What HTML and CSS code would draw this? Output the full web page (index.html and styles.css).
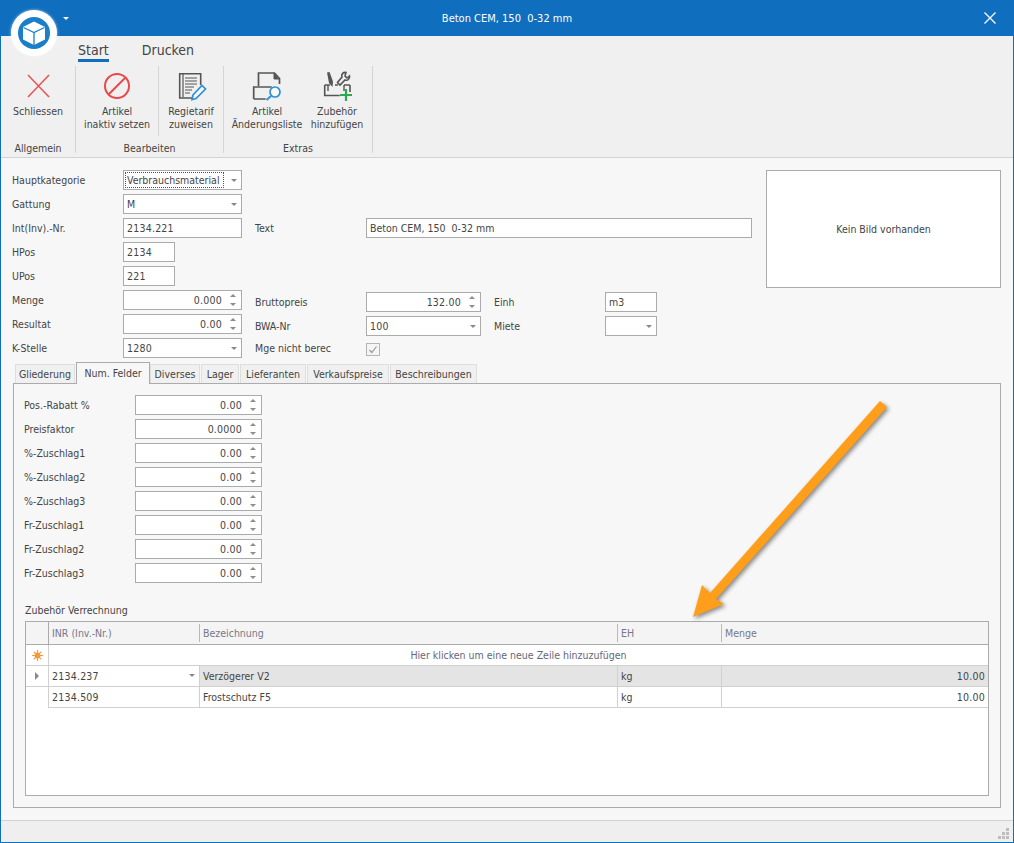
FILE: index.html
```html
<!DOCTYPE html>
<html lang="de">
<head>
<meta charset="utf-8">
<title>Beton CEM, 150 0-32 mm</title>
<link rel="stylesheet" href="styles.css">
</head>
<body>
<div class="window">
  <header class="titlebar">
    <span class="title">Beton CEM, 150&nbsp; 0-32 mm</span>
    <svg class="close" width="12" height="12" viewBox="0 0 12 12"><path d="M.5.5l11 11M11.5.5l-11 11" stroke="#fff" stroke-width="1.3" fill="none"/></svg>
  </header>
  <div class="logo">
    <svg width="46" height="46" viewBox="0 0 46 46">
      <circle cx="23" cy="23" r="16" fill="#1a7fc8"/>
      <path d="M23 11.500l11 5.500v12.500l-11 5.500-11-5.500V17z" fill="#fff"/>
      <path d="M12.500 17.500l10.500 5 10.500-5M23 22.500V35" fill="none" stroke="#1a7fc8" stroke-width="1.300"/>
    </svg>
  </div>
  <span class="qat-caret"></span>

  <section class="ribbon">
    <nav class="ribbon-tabs">
      <span class="rtab rtab-active">Start</span>
      <span class="rtab">Drucken</span>
    </nav>
    <div class="ribbon-body">
      <div class="rgroup rgroup-1">
        <div class="rbuttons">
          <div class="rbtn rbtn-close">
            <svg width="32" height="32" viewBox="0 0 32 32"><path d="M6 5l21 22M27 5L6 27" stroke="#e8565a" stroke-width="1.600" fill="none"/></svg>
            <span>Schliessen</span>
          </div>
        </div>
        <div class="rlabel">Allgemein</div>
      </div>
      <div class="rgroup rgroup-2">
        <div class="rbuttons">
          <div class="rbtn rbtn-inactive">
            <svg width="32" height="32" viewBox="0 0 32 32"><circle cx="16" cy="16" r="12" fill="none" stroke="#e8484c" stroke-width="2"/><path d="M7.500 24.500l17-17" stroke="#e8484c" stroke-width="2"/></svg>
            <span>Artikel<br>inaktiv setzen</span>
          </div>
          <div class="rbtn rbtn-regie">
            <svg width="32" height="32" viewBox="0 0 32 32">
              <path d="M17 28H4.700V3.700h21V15" fill="none" stroke="#555" stroke-width="1.600"/>
              <path d="M8 4v23" stroke="#555" stroke-width="1.200"/>
              <path d="M10 8h12M10 11h12M10 14h12M10 17h9M10 20h7M10 23h5" stroke="#555" stroke-width="1.200"/>
              <path d="M18 25l9-9.500 3.500 3.500-9.500 9.500-4 1z" fill="#f4f9fd" stroke="#2d8fd5" stroke-width="1.700"/>
            </svg>
            <span>Regietarif<br>zuweisen</span>
          </div>
        </div>
        <div class="rlabel">Bearbeiten</div>
      </div>
      <div class="rgroup rgroup-3">
        <div class="rbuttons">
          <div class="rbtn rbtn-list">
            <svg width="32" height="32" viewBox="0 0 32 32">
              <path d="M7.500 16V3h16l5 5.500V14" fill="none" stroke="#555" stroke-width="1.700"/>
              <path d="M23 3v6h5" fill="#555" stroke="#555" stroke-width="1"/>
              <path d="M2.700 29V17h18M2.700 29h12" fill="none" stroke="#555" stroke-width="1.700"/>
              <circle cx="24" cy="22" r="5" fill="#f6fbff" stroke="#2d8fd5" stroke-width="1.700"/>
              <path d="M20 26l-4.500 4" stroke="#2d8fd5" stroke-width="2"/>
            </svg>
            <span>Artikel<br>Änderungsliste</span>
          </div>
          <div class="rbtn rbtn-add">
            <svg width="32" height="32" viewBox="0 0 32 32">
              <path d="M3.700 15v10.500h15M29 22V15M3.700 15H9M14 15h3M23 15h6" fill="none" stroke="#555" stroke-width="1.600"/>
              <path d="M6 2.500l2.500-.5 3.500 9.500-.5 5.500-3.500-4z" fill="#555"/>
              <path d="M25 2.500c-3-.5-5 2-4 4.500L16.500 12.500 19 15l5-5c2.500 1 5-1 4.500-4L26 8l-2-2z" fill="none" stroke="#555" stroke-width="1.600"/>
              <path d="M7 21v-6M23 21v-6" stroke="#555" stroke-width="1.400"/>
              <path d="M25 19v12M19 25h12" stroke="#2fa84f" stroke-width="2.200"/>
            </svg>
            <span>Zubehör<br>hinzufügen</span>
          </div>
        </div>
        <div class="rlabel">Extras</div>
      </div>
    </div>
  </section>

  <main class="content">
    <form class="head-form">
      <label class="r1 c1">Hauptkategorie</label>
      <div class="field r1 c2 combo"><span class="val focus">Verbrauchsmaterial</span><i class="caret"></i></div>

      <div class="picture"><span>Kein Bild vorhanden</span></div>

      <label class="r2 c1">Gattung</label>
      <div class="field r2 c2 combo"><span class="val">M</span><i class="caret"></i></div>

      <label class="r3 c1">Int(Inv).-Nr.</label>
      <div class="field r3 c2"><span class="val digits">2134.221</span></div>
      <label class="r3 c3">Text</label>
      <div class="field r3 c-text"><span class="val">Beton CEM, 150&nbsp; 0-32 mm</span></div>

      <label class="r4 c1">HPos</label>
      <div class="field r4 c2-short"><span class="val digits">2134</span></div>

      <label class="r5 c1">UPos</label>
      <div class="field r5 c2-short"><span class="val digits">221</span></div>

      <label class="r6 c1">Menge</label>
      <div class="field r6 c2 num"><span class="val digits">0.000</span><i class="spin"></i></div>
      <label class="r6 c3 low">Bruttopreis</label>
      <div class="field r6 c4 num low"><span class="val digits">132.00</span><i class="spin"></i></div>
      <label class="r6 c5 low">Einh</label>
      <div class="field r6 c6 low"><span class="val">m3</span></div>

      <label class="r7 c1">Resultat</label>
      <div class="field r7 c2 num"><span class="val digits">0.00</span><i class="spin"></i></div>
      <label class="r7 c3 low">BWA-Nr</label>
      <div class="field r7 c4 combo low"><span class="val digits">100</span><i class="caret"></i></div>
      <label class="r7 c5 low">Miete</label>
      <div class="field r7 c6 combo low"><span class="val"></span><i class="caret"></i></div>

      <label class="r8 c1">K-Stelle</label>
      <div class="field r8 c2 combo"><span class="val digits">1280</span><i class="caret"></i></div>
      <label class="r8 c3">Mge nicht berec</label>
      <div class="check r8 c4">
        <svg width="12" height="11" viewBox="0 0 12 11"><path d="M2.500 6l2.300 2.500 4.700-6" fill="none" stroke="#9a9a9a" stroke-width="1.200"/></svg>
      </div>
    </form>

    <div class="tabs">
      <span class="tab t-glied">Gliederung</span>
      <span class="tab tab-active t-num">Num. Felder</span>
      <span class="tab t-div">Diverses</span>
      <span class="tab t-lager">Lager</span>
      <span class="tab t-lief">Lieferanten</span>
      <span class="tab t-verk">Verkaufspreise</span>
      <span class="tab t-besch">Beschreibungen</span>
    </div>

    <section class="panel">
      <div class="num-fields">
        <label>Pos.-Rabatt %</label><div class="field num"><span class="val digits">0.00</span><i class="spin"></i></div>
        <label>Preisfaktor</label><div class="field num"><span class="val digits">0.0000</span><i class="spin"></i></div>
        <label>%-Zuschlag1</label><div class="field num"><span class="val digits">0.00</span><i class="spin"></i></div>
        <label>%-Zuschlag2</label><div class="field num"><span class="val digits">0.00</span><i class="spin"></i></div>
        <label>%-Zuschlag3</label><div class="field num"><span class="val digits">0.00</span><i class="spin"></i></div>
        <label>Fr-Zuschlag1</label><div class="field num"><span class="val digits">0.00</span><i class="spin"></i></div>
        <label>Fr-Zuschlag2</label><div class="field num"><span class="val digits">0.00</span><i class="spin"></i></div>
        <label>Fr-Zuschlag3</label><div class="field num"><span class="val digits">0.00</span><i class="spin"></i></div>
      </div>

      <div class="grid-caption">Zubehör Verrechnung</div>
      <div class="grid">
        <div class="row head">
          <div class="cell ind"></div>
          <div class="cell first"><span>INR (Inv.-Nr.)</span></div>
          <div class="cell"><span>Bezeichnung</span></div>
          <div class="cell"><span>EH</span></div>
          <div class="cell"><span>Menge</span></div>
        </div>
        <div class="row new">
          <div class="cell ind"><svg width="11" height="11" viewBox="0 0 11 11"><path d="M5.500 0v11M0 5.500h11M1.700 1.700l7.600 7.600M9.300 1.700l-7.600 7.600" stroke="#f59a3c" stroke-width="1.100"/><circle cx="5.500" cy="5.500" r="3" fill="#f59a3c"/></svg></div>
          <div class="cell newtext">Hier klicken um eine neue Zeile hinzuzufügen</div>
        </div>
        <div class="row sel">
          <div class="cell ind"><i class="pointer"></i></div>
          <div class="cell editor digits">2134.237<i class="caret"></i></div>
          <div class="cell">Verzögerer V2</div>
          <div class="cell">kg</div>
          <div class="cell right digits">10.00</div>
        </div>
        <div class="row">
          <div class="cell ind none"></div>
          <div class="cell digits">2134.509</div>
          <div class="cell">Frostschutz F5</div>
          <div class="cell">kg</div>
          <div class="cell right digits">10.00</div>
        </div>
      </div>
    </section>
  </main>

  <footer class="statusbar">
    <svg class="grip" width="11" height="11" viewBox="0 0 11 11"><path d="M8 0h3v3H8zM4 4h3v3H4zM8 4h3v3H8zM0 8h3v3H0zM4 8h3v3H4zM8 8h3v3H8z" fill="#bdbdbd"/></svg>
  </footer>

  <svg class="arrow" width="220" height="240" viewBox="680 390 220 240">
    <polygon points="880,401 887,407 716,599 724,604 693,617 702,585 710,593" fill="#ff9e1b"/>
  </svg>
</div>
</body>
</html>
```
FILE: styles.css
```css
* { box-sizing: border-box; }

html, body { margin: 0; padding: 0; }

body {
  font-family: "DejaVu Sans Condensed", "DejaVu Sans", sans-serif;
  font-stretch: condensed;
  font-size: 10.500px;
  color: #444;
  background: #fff;
}

.digits { letter-spacing: .22px; }

.window {
  position: relative;
  width: 1014px;
  height: 843px;
  display: flex;
  flex-direction: column;
  border: 1px solid #106ebe;
  border-top: 0;
  background: #f7f7f7;
  overflow: hidden;
}

/* title bar */
.titlebar {
  height: 36px;
  flex: none;
  margin: 0 -1px;
  background: #106ebe;
  color: #fff;
  font-size: 11px;
  display: flex;
  align-items: center;
  justify-content: center;
  position: relative;
}

.close { position: absolute; right: 18px; top: 12px; }

.logo {
  position: absolute;
  left: 10px;
  top: 10px;
  width: 46px;
  height: 46px;
  border-radius: 50%;
  background: #fff;
  box-shadow: 0 0 3px rgba(255, 255, 255, .7);
}

.logo svg { display: block; }

.qat-caret {
  position: absolute;
  left: 62px;
  top: 17px;
  border: 3px solid transparent;
  border-top: 3px solid #fff;
}

/* ribbon */
.ribbon {
  flex: none;
  height: 122px;
  background: #f0f0f0;
  border-bottom: 1px solid #d2d2d2;
  display: flex;
  flex-direction: column;
}

.ribbon-tabs {
  height: 30px;
  flex: none;
  padding-left: 77px;
  display: flex;
  gap: 33px;
}

.rtab {
  font-size: 14px;
  line-height: 19px;
  padding-top: 5px;
  color: #444;
  box-sizing: content-box;
  height: 18px;
  white-space: nowrap;
}

.rtab-active { border-bottom: 3px solid #106ebe; }

.ribbon-body {
  height: 87px;
  flex: none;
  display: flex;
}

.rgroup {
  display: flex;
  flex-direction: column;
  border-right: 1px solid #d4d4d4;
}

.rgroup-1 { width: 75px; }
.rgroup-2 { width: 148px; }
.rgroup-3 { width: 149px; }

.rbuttons { display: flex; height: 70px; flex: none; }

.rbtn {
  display: flex;
  flex-direction: column;
  align-items: center;
  padding-top: 4px;
  line-height: 13px;
  text-align: center;
  white-space: nowrap;
}

.rbtn svg { display: block; margin-bottom: 3px; flex: none; }

.rbtn-close { width: 74px; }
.rbtn-inactive { width: 83px; border-right: 1px solid #d4d4d4; }
.rbtn-regie { width: 64px; }
.rbtn-list { width: 86px; }
.rbtn-add { width: 54px; }

.rlabel {
  flex: none;
  margin-top: 6px;
  line-height: 13px;
  text-align: center;
}

/* form */
.content {
  flex: 1;
  min-height: 0;
  display: flex;
  flex-direction: column;
  padding: 12px 12px 12px 11px;
}

.head-form {
  display: grid;
  grid-template-columns: 111px 119px 13px 111px 115px 13px 111px 52px 95px 14px 235px;
  grid-template-rows: repeat(8, 20px);
  row-gap: 4px;
  flex: none;
}

label {
  line-height: 21px;
  white-space: nowrap;
}

.r1 { grid-row: 1; }
.r2 { grid-row: 2; }
.r3 { grid-row: 3; }
.r4 { grid-row: 4; }
.r5 { grid-row: 5; }
.r6 { grid-row: 6; }
.r7 { grid-row: 7; }
.r8 { grid-row: 8; }

.c1 { grid-column: 1; }
.c2 { grid-column: 2; }
.c3 { grid-column: 4; }
.c4 { grid-column: 5; }
.c5 { grid-column: 7; }
.c6 { grid-column: 8; }
.c-text { grid-column: 5 / 10; }
.c2-short { grid-column: 2; width: 52px; }

.low { margin-top: 2px; }

.field {
  height: 20px;
  border: 1px solid #ababab;
  background: #fff;
  display: flex;
  align-items: flex-start;
  padding: 0 3px;
  line-height: 19px;
  position: relative;
  white-space: nowrap;
}

.val { flex: 1; min-width: 0; }

.num { justify-content: flex-end; text-align: right; padding-right: 19px; }

.focus {
  flex: none;
  width: 99px;
  height: 16px;
  line-height: 17px;
  margin-top: 1px;
  outline: 1px dotted #555;
  outline-offset: -1px;
  margin-left: -2px;
  padding-left: 2px;
}

.caret {
  position: absolute;
  right: 4px;
  top: 8px;
  border: 3px solid transparent;
  border-top: 3px solid #888;
  border-bottom: 0;
}

.spin {
  position: absolute;
  right: 5px;
  top: 3px;
  width: 6px;
  height: 12px;
}

.spin::before,
.spin::after {
  content: "";
  position: absolute;
  left: 0;
  border: 3px solid transparent;
}

.spin::before { top: 0; border-top: 0; border-bottom: 3px solid #8c8c8c; }
.spin::after { bottom: 0; border-bottom: 0; border-top: 3px solid #8c8c8c; }

.check {
  width: 14px;
  height: 13px;
  margin-top: 5px;
  border: 1px solid #b5b5b5;
  background: #f4f4f4;
}

.check svg { display: block; margin: 0; }

.picture {
  grid-column: 11;
  grid-row: 1 / 6;
  height: 118px;
  border: 1px solid #ababab;
  background: #fff;
  display: flex;
  align-items: center;
  justify-content: center;
}

/* tabs */
.tabs {
  flex: none;
  margin-top: 4px;
  height: 21px;
  padding-left: 3px;
  display: flex;
  align-items: flex-end;
  position: relative;
  z-index: 1;
}

.tab {
  height: 19px;
  background: #f0f0f0;
  border: 1px solid #dedede;
  border-bottom: 0;
  line-height: 19px;
  text-align: center;
  white-space: nowrap;
  margin-right: 1px;
}

.tab-active {
  height: 22px;
  margin-bottom: -1px;
  background: #f7f7f7;
  border: 1px solid #ababab;
  border-bottom: 0;
  line-height: 20px;
  margin-right: 0;
}

.t-glied { width: 60px; }
.t-num { width: 74px; }
.t-div { width: 50px; }
.t-lager { width: 38px; }
.t-lief { width: 66px; }
.t-verk { width: 82px; }
.t-besch { width: 87px; }

/* panel */
.panel {
  flex: 1;
  min-height: 0;
  margin-left: 1px;
  border: 1px solid #ababab;
  padding: 11px 11px 11px 10px;
  display: flex;
  flex-direction: column;
}

.num-fields {
  display: grid;
  grid-template-columns: 111px 127px;
  grid-auto-rows: 20px;
  row-gap: 4px;
  flex: none;
}

.grid-caption {
  margin: 20px 0 4px;
  padding-left: 1px;
  line-height: 15px;
  height: 14px;
  flex: none;
}

.grid {
  flex: 1;
  margin-left: 1px;
  border: 1px solid #ababab;
  background: #fff;
}

.row {
  display: grid;
  grid-template-columns: 22px 151px 418px 104px 267px;
  grid-template-rows: 21px;
  height: 21px;
}

.head {
  height: 23px;
  grid-template-rows: 22px;
  background: #f4f4f4;
  border-bottom: 1px solid #ababab;
  color: #77778a;
}

.cell {
  height: 21px;
  border-left: 1px solid #d0d0d0;
  border-bottom: 1px solid #d0d0d0;
  padding: 0 3px;
  line-height: 21px;
  white-space: nowrap;
  position: relative;
}

.head .cell {
  height: 22px;
  border: 0;
  padding: 2px 0;
  line-height: 19px;
}

.head .cell span {
  display: block;
  height: 18px;
  padding-left: 3px;
  border-left: 1px solid #b8b8b8;
}

.head .first { border-left: 1px solid #ababab; padding: 0; line-height: 22px; }
.head .first span { border-left: 0; height: 22px; padding-top: 2px; line-height: 19px; }

.ind {
  border-left: 0;
  display: flex;
  align-items: center;
  justify-content: center;
}

.ind.none { border-bottom: 0; }

.head .ind { border: 0; }

.newtext {
  grid-column: 2 / 6;
  text-align: center;
  color: #66667a;
}

.sel .cell { background: #e4e4e4; }
.sel .ind, .sel .editor { background: #fff; }

.pointer {
  border: 4px solid transparent;
  border-left: 4px solid #8a8a8a;
  border-right: 0;
}

.right { text-align: right; }

/* status bar */
.statusbar {
  flex: none;
  height: 22px;
  background: #efefef;
  border-top: 1px solid #d2d2d2;
  position: relative;
}

.grip { position: absolute; right: 4px; bottom: 3px; }

/* annotation arrow */
.arrow {
  position: absolute;
  left: 679px;
  top: 390px;
  filter: drop-shadow(2px 2px 2px rgba(0, 0, 0, .45));
  pointer-events: none;
}
```
